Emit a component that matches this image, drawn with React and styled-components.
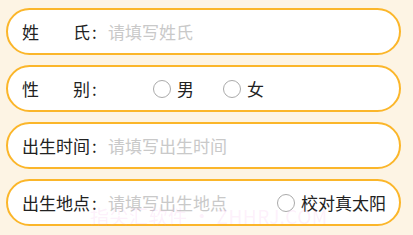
import React from 'react';
import styled, { createGlobalStyle } from 'styled-components';

const GlobalStyle = createGlobalStyle`
  html, body {
    margin: 0;
    padding: 0;
    background: #fdf4e4;
  }
  body {
    font-family: "Noto Sans CJK SC", "Noto Sans", sans-serif;
  }
`;

const Page = styled.div`
  position: relative;
  display: flex;
  flex-direction: column;
  gap: 10px;
  width: 395px;
  padding: 8px 12px 0 6px;
`;

const Row = styled.div`
  display: flex;
  align-items: center;
  box-sizing: border-box;
  height: 47px;
  padding: 0 13px 0 14px;
  background: #ffffff;
  border: 2px solid #fbb62a;
  border-radius: 24px;
`;

const Label = styled.span`
  display: inline-block;
  width: 68px;
  font-size: 17px;
  color: #222;
  text-align: justify;
  text-align-last: justify;
  white-space: nowrap;
`;

const Colon = styled.span`
  font-size: 17px;
  color: #222;
  margin-left: 2px;
  width: 16px;
`;

const Input = styled.input`
  flex: 1;
  min-width: 0;
  border: none;
  outline: none;
  padding: 0;
  font-family: inherit;
  font-size: 17px;
  color: #222;
  background: transparent;
  &::placeholder {
    color: #c9c9c9;
  }
`;

const Radios = styled.div`
  display: flex;
  align-items: center;
  gap: 29px;
  margin-left: ${(p) => p.$offset || 0}px;
`;

const Option = styled.label`
  display: flex;
  align-items: center;
  gap: 6px;
  font-size: 17px;
  color: #222;
`;

const Circle = styled.span`
  box-sizing: border-box;
  width: 18px;
  height: 18px;
  border: 1.5px solid #aaaaaa;
  border-radius: 50%;
`;

const Watermark = styled.div`
  position: absolute;
  left: 90px;
  top: 202px;
  font-family: "Noto Sans CJK SC", sans-serif;
  font-size: 19px;
  letter-spacing: 0.5px;
  color: rgba(240, 150, 230, 0.14);
  pointer-events: none;
  white-space: nowrap;
`;

export default function App() {
  return (
    <>
      <GlobalStyle />
      <Page>
        <Row>
          <Label>姓氏</Label>
          <Colon>:</Colon>
          <Input placeholder="请填写姓氏" />
        </Row>
        <Row>
          <Label>性别</Label>
          <Colon>:</Colon>
          <Radios $offset={45}>
            <Option>
              <Circle />
              男
            </Option>
            <Option>
              <Circle />
              女
            </Option>
          </Radios>
        </Row>
        <Row>
          <Label>出生时间</Label>
          <Colon>:</Colon>
          <Input placeholder="请填写出生时间" />
        </Row>
        <Row>
          <Label>出生地点</Label>
          <Colon>:</Colon>
          <Input placeholder="请填写出生地点" />
          <Option>
            <Circle />
            校对真太阳
          </Option>
        </Row>
        <Watermark>指尖汇软件 • ZHHRJ.COM</Watermark>
      </Page>
    </>
  );
}
